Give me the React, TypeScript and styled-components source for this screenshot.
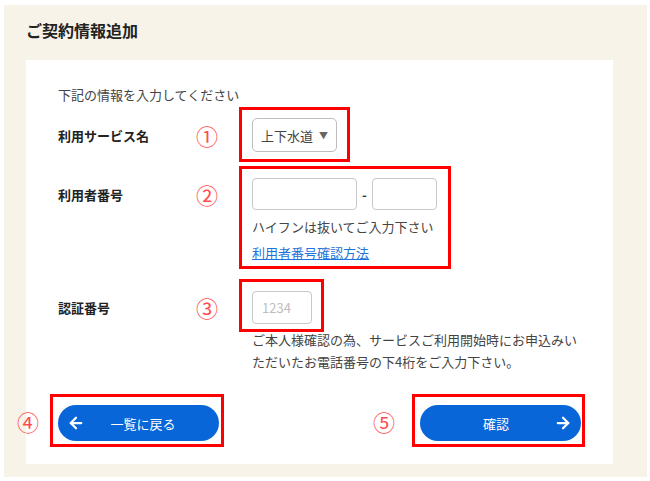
import React from "react";
import styled, { createGlobalStyle } from "styled-components";
import { ArrowLeft, ArrowRight } from "lucide-react";

const GlobalStyle = createGlobalStyle`
  html, body { margin: 0; padding: 0; background: #ffffff; }
  body { font-family: "Noto Sans CJK JP", "Noto Sans", sans-serif; color: #333; }
  * { box-sizing: border-box; }
`;

const Page = styled.div`
  padding: 5px 3px 5px 4px;
  width: 650px;
`;

const Panel = styled.section`
  background: #f7f3e8;
  padding: 13px 34px 13px 22px;
`;

const Title = styled.h1`
  margin: 0 0 18px;
  font-size: 16px;
  line-height: 24px;
  font-weight: 700;
  color: #222;
`;

const Card = styled.div`
  background: #ffffff;
  padding: 25px 32px 17px 32px;
`;

const Intro = styled.p`
  margin: 0 0 2px;
  font-size: 13px;
  line-height: 20px;
  color: #444;
`;

const Row = styled.div<{ $mt: number }>`
  display: grid;
  grid-template-columns: 138px 43px 1fr;
  align-items: start;
  margin-top: ${(p) => p.$mt}px;
`;

const Label = styled.div`
  height: 56px;
  display: flex;
  align-items: center;
  font-size: 13px;
  font-weight: 700;
  color: #222;
`;

const Marker = styled.span<{ $w?: number }>`
  display: inline-flex;
  align-items: center;
  width: ${(p) => (p.$w ? `${p.$w}px` : "auto")};
  font-size: 22px;
  line-height: 20px;
  color: #ff4d4d;
  font-weight: 400;
`;

const MarkerCell = styled.div`
  height: 56px;
  display: flex;
  align-items: center;
  padding-left: 0;
`;

const Field = styled.div`
  display: flex;
  flex-direction: column;
  align-items: flex-start;
`;

const Callout = styled.div<{ $pad: string }>`
  border: 3px solid #ff0000;
  padding: ${(p) => p.$pad};
  display: flex;
  flex-direction: column;
  align-items: flex-start;
`;

const SelectBox = styled.div`
  width: 85px;
  height: 34px;
  border: 1px solid #bdbdbd;
  border-radius: 5px;
  background: #fff;
  display: flex;
  align-items: center;
  justify-content: space-between;
  padding: 0 8px;
  font-size: 13px;
  color: #444;
`;

const Caret = styled.span`
  font-size: 9px;
  color: #666;
`;

const InputLine = styled.div`
  display: flex;
  align-items: center;
  gap: 5px;
`;

const TextInput = styled.input<{ $w: number; $h: number }>`
  width: ${(p) => p.$w}px;
  height: ${(p) => p.$h}px;
  border: 1px solid #c8c8c8;
  border-radius: 4px;
  padding: 0 9px;
  font-family: inherit;
  font-size: 13px;
  color: #333;
  background: #fff;
  outline: none;
  &::placeholder { color: #bdbdbd; }
`;

const Hyphen = styled.span`
  font-size: 13px;
  color: #333;
  font-weight: 700;
`;

const Note = styled.p<{ $mt: number; $lh?: number }>`
  margin: ${(p) => p.$mt}px 0 0;
  font-size: 13px;
  line-height: ${(p) => p.$lh ?? 20}px;
  color: #444;
`;

const HelpLink = styled.a`
  display: block;
  margin-top: 6px;
  font-size: 13px;
  line-height: 20px;
  color: #1f73d9;
  text-decoration: underline;
`;

const Explain = styled.p`
  margin: -3px 0 0 13px;
  width: 329px;
  font-size: 13px;
  line-height: 22px;
  color: #444;
`;

const ButtonRow = styled.div`
  display: flex;
  justify-content: space-between;
  align-items: center;
  margin: 21px -4px 0 -41px;
`;

const ButtonGroup = styled.div<{ $gap: number }>`
  display: flex;
  align-items: center;
  gap: ${(p) => p.$gap}px;
`;

const ActionButton = styled.button<{ $dir: "back" | "next" }>`
  width: 161px;
  height: 36px;
  border: none;
  border-radius: 18px;
  background: #0866d8;
  color: #fff;
  display: flex;
  align-items: center;
  padding: 0 9px;
  font-family: inherit;
  font-size: 13px;
  cursor: pointer;
  flex-direction: ${(p) => (p.$dir === "back" ? "row" : "row-reverse")};
`;

const ButtonText = styled.span<{ $dir: "back" | "next" }>`
  flex: 1;
  text-align: center;
  ${(p) => (p.$dir === "back" ? "padding-right: 9px;" : "padding-left: 9px;")}
`;

export default function App() {
  return (
    <>
      <GlobalStyle />
      <Page>
        <Panel>
          <Title>ご契約情報追加</Title>
          <Card>
            <Intro>下記の情報を入力してください</Intro>

            <Row $mt={0}>
              <Label>利用サービス名</Label>
              <MarkerCell><Marker>①</Marker></MarkerCell>
              <Field>
                <Callout $pad="8px 10px 7px 10px">
                  <SelectBox>
                    <span>上下水道</span>
                    <Caret>▼</Caret>
                  </SelectBox>
                </Callout>
              </Field>
            </Row>

            <Row $mt={3}>
              <Label>利用者番号</Label>
              <MarkerCell><Marker>②</Marker></MarkerCell>
              <Field>
                <Callout $pad="9px 11px 3px 10px">
                  <InputLine>
                    <TextInput $w={105} $h={32} />
                    <Hyphen>-</Hyphen>
                    <TextInput $w={65} $h={32} />
                  </InputLine>
                  <Note $mt={7}>ハイフンは抜いてご入力下さい</Note>
                  <HelpLink href="#">利用者番号確認方法</HelpLink>
                </Callout>
              </Field>
            </Row>

            <Row $mt={10}>
              <Label>認証番号</Label>
              <MarkerCell><Marker>③</Marker></MarkerCell>
              <Field>
                <Callout $pad="9px 9px 5px 10px">
                  <TextInput $w={60} $h={33} placeholder="1234" />
                </Callout>
                <Explain>
                  ご本人様確認の為、サービスご利用開始時にお申込みいただいたお電話番号の下4桁をご入力下さい。
                </Explain>
              </Field>
            </Row>

            <ButtonRow>
              <ButtonGroup $gap={10}>
                <Marker $w={23}>④</Marker>
                <Callout $pad="8px 2px 3px 5px">
                  <ActionButton $dir="back" type="button">
                    <ArrowLeft size={18} strokeWidth={3} />
                    <ButtonText $dir="back">一覧に戻る</ButtonText>
                  </ActionButton>
                </Callout>
              </ButtonGroup>
              <ButtonGroup $gap={17}>
                <Marker $w={22}>⑤</Marker>
                <Callout $pad="8px 1px 3px 5px">
                  <ActionButton $dir="next" type="button">
                    <ArrowRight size={18} strokeWidth={3} />
                    <ButtonText $dir="next">確認</ButtonText>
                  </ActionButton>
                </Callout>
              </ButtonGroup>
            </ButtonRow>
          </Card>
        </Panel>
      </Page>
    </>
  );
}
